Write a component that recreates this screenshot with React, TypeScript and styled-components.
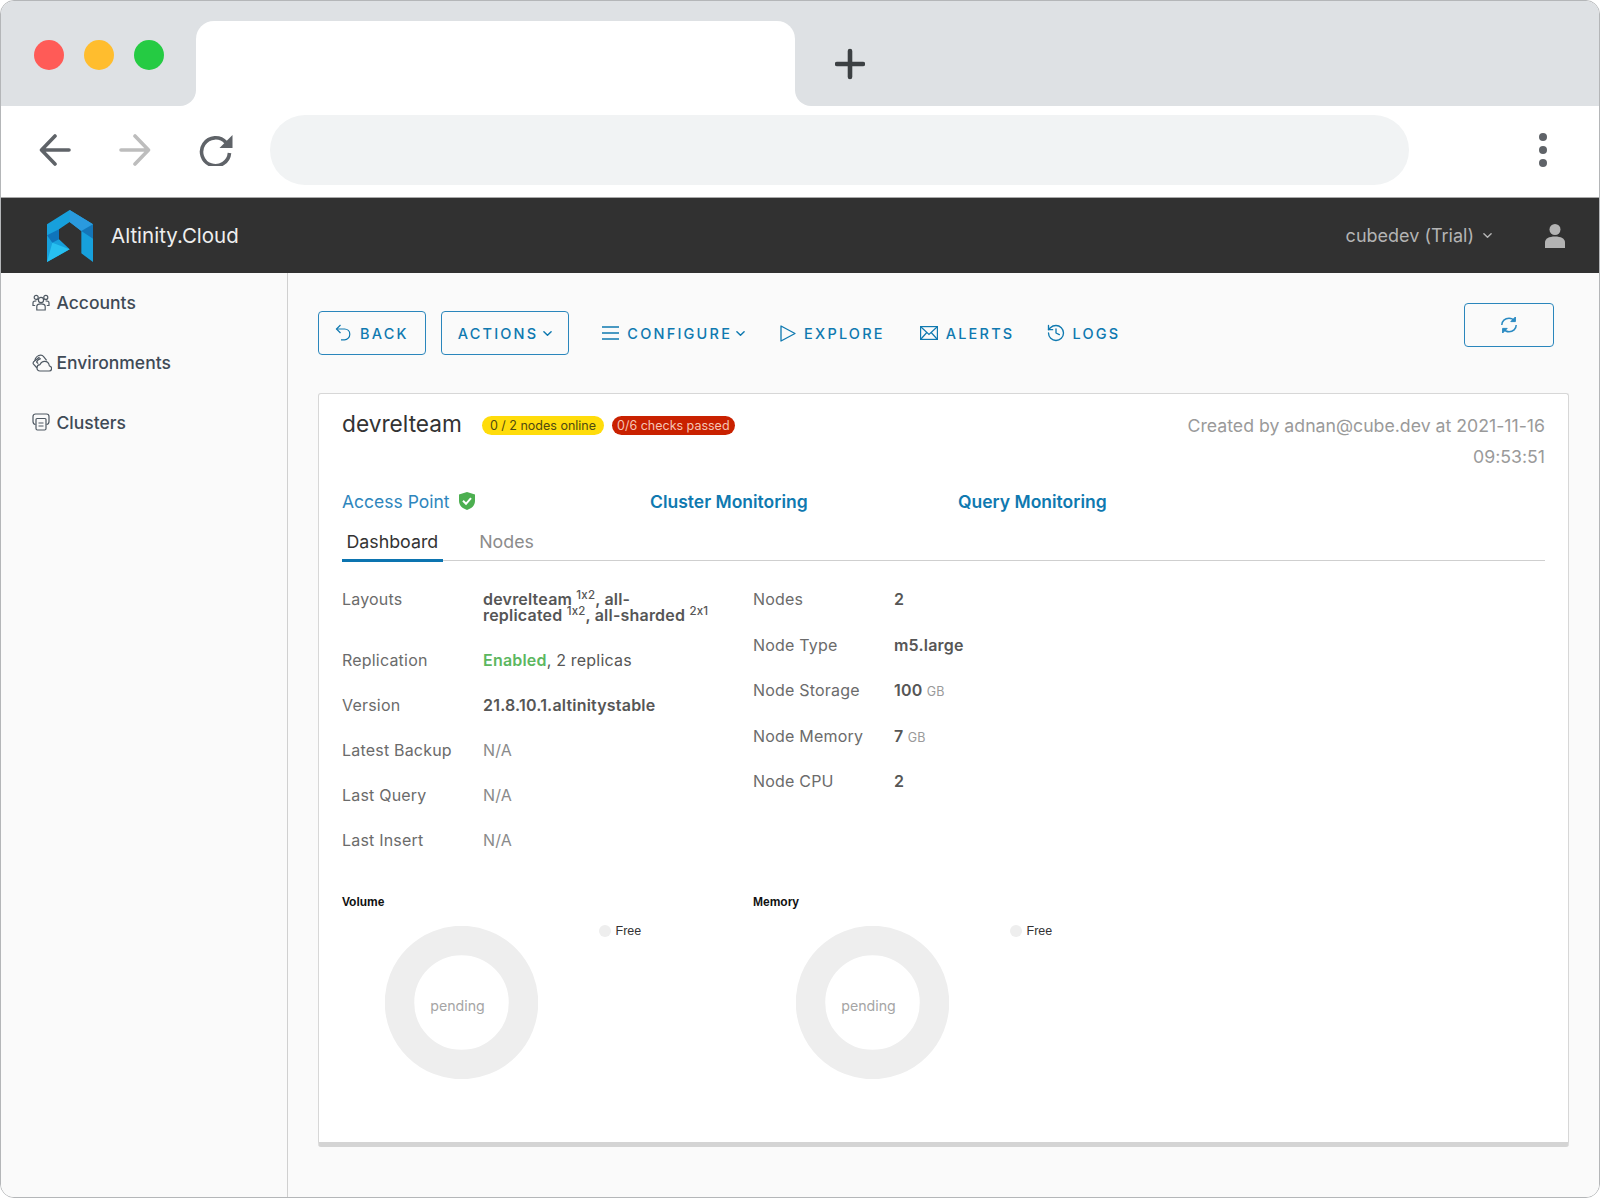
import * as React from "react";
import styled, { createGlobalStyle } from "styled-components";
import { History } from "lucide-react";

const sans = `Inter, "Liberation Sans", sans-serif`;
const blue = "#0f79b0";

const GlobalStyle = createGlobalStyle`
  html, body {
    margin: 0;
    background: #fff;
  }
  body {
    font-family: ${sans};
    font-feature-settings: "calt" 0;
  }
`;

const Window = styled.div`
  box-sizing: border-box;
  width: 1600px;
  height: 1198px;
  display: flex;
  flex-direction: column;
  overflow: hidden;
  border: 1.5px solid #b4b6b8;
  border-radius: 14px;
  background: #fff;
`;

const TabStrip = styled.div`
  display: grid;
  grid-template-columns: 195px 599px 1fr;
  height: 105px;
  flex: none;
`;

const LeftCap = styled.div`
  display: flex;
  gap: 20px;
  padding: 39px 0 0 32.5px;
  background: #dee1e4;
  border-bottom-right-radius: 16px;
`;

const Dot = styled.span<{ $color: string }>`
  width: 30px;
  height: 30px;
  border-radius: 50%;
  background: ${(p) => p.$color};
`;

const TabSlot = styled.div`
  background: #dee1e4;
  padding-top: 20px;
`;

const ActiveTab = styled.div`
  height: 85px;
  background: #fff;
  border-radius: 18px 18px 0 0;
`;

const RightCap = styled.div`
  padding: 47px 0 0 40px;
  background: #dee1e4;
  border-bottom-left-radius: 16px;
`;

const NavRow = styled.div`
  display: flex;
  align-items: center;
  box-sizing: border-box;
  flex: none;
  height: 92px;
  padding: 0 52px 3px 38px;
  gap: 48px;
  border-bottom: 1px solid #a9a9a9;
`;

const AddressBar = styled.div`
  width: 1139px;
  height: 70px;
  margin-left: -11px;
  border-radius: 35px;
  background: #f1f3f4;
`;

const Kebab = styled.div`
  display: flex;
  flex-direction: column;
  gap: 5px;
  margin-left: auto;
`;

const KebabDot = styled.span`
  width: 8px;
  height: 8px;
  border-radius: 50%;
  background: #5f6368;
`;

const Header = styled.header`
  display: flex;
  align-items: center;
  flex: none;
  height: 75px;
  padding: 0 34px 0 46px;
  background: #313131;
`;

const Brand = styled.div`
  margin-left: 18px;
  color: #eeeeee;
  font-size: 20.5px;
`;

const Account = styled.div`
  display: flex;
  align-items: center;
  gap: 9px;
  margin-left: auto;
  margin-right: 53px;
  color: #b4b4b4;
  font-size: 18px;
`;

const Body = styled.div`
  display: flex;
  flex: 1;
  min-height: 0;
  background: #fafafa;
`;

const Sidebar = styled.nav`
  flex: none;
  width: 287px;
  padding-left: 31px;
  box-sizing: border-box;
  border-right: 1.5px solid #d0d0d0;
`;

const SideItem = styled.div`
  display: grid;
  grid-template-columns: 24.5px 1fr;
  align-items: center;
  height: 59.7px;
  color: #3f4a56;
  font-size: 17.5px;
  font-weight: 500;
`;

const Main = styled.main`
  flex: 1;
  min-width: 0;
  padding: 30px 30px 0 30px;
`;

const Toolbar = styled.div`
  display: flex;
  align-items: flex-start;
  height: 90px;
`;

const ButtonGroup = styled.div`
  display: flex;
  gap: 15px;
  margin-top: 8px;
`;

const OutlineButton = styled.button`
  display: flex;
  align-items: center;
  gap: 9px;
  box-sizing: border-box;
  height: 44px;
  margin: 0;
  padding: 0 16px;
  border: 1.5px solid #2a86bc;
  border-radius: 4px;
  background: transparent;
  color: ${blue};
  font-family: ${sans};
  font-size: 14.5px;
  font-weight: 500;
  letter-spacing: 2.2px;
`;

const ActionLinks = styled.div`
  display: flex;
  align-items: center;
  gap: 35px;
  height: 44px;
  margin: 8px 0 0 33px;
`;

const ActionLink = styled.a`
  display: flex;
  align-items: center;
  gap: 8px;
  color: ${blue};
  font-size: 14.5px;
  font-weight: 500;
  letter-spacing: 2.2px;
`;

const LogsLink = styled(ActionLink)`
  gap: 6px;
  margin-left: -3px;
`;

const CaretSlot = styled.span`
  display: flex;
  margin-left: -4px;
`;

const RefreshButton = styled(OutlineButton)`
  justify-content: center;
  width: 90px;
  margin-left: auto;
  margin-right: 15px;
  padding: 0;
`;

const Card = styled.section`
  box-sizing: border-box;
  height: 754px;
  padding: 0 23px;
  border: 1px solid #d7d7d7;
  border-bottom: 5px solid #d4d4d4;
  border-radius: 3px;
  background: #fff;
`;

const CardHead = styled.div`
  display: flex;
  justify-content: space-between;
  height: 62px;
  padding-top: 16px;
`;

const TitleRow = styled.div`
  display: flex;
  align-items: center;
  height: 31px;
`;

const Title = styled.h2`
  margin: -4px 20px 0 0;
  color: #333;
  font-size: 22.7px;
  font-weight: 400;
`;

const Badge = styled.span<{ $bg: string; $fg: string; $pad: number }>`
  display: flex;
  align-items: center;
  height: 19px;
  margin: -1px 8px 0 0;
  padding: 0 ${(p) => p.$pad}px;
  border-radius: 10px;
  background: ${(p) => p.$bg};
  color: ${(p) => p.$fg};
  font-size: 12.5px;
`;

const Created = styled.div`
  width: 370px;
  color: #9a9a9a;
  font-size: 17.7px;
  line-height: 31px;
  text-align: right;
`;

const LinkRow = styled.div`
  display: grid;
  grid-template-columns: 308px 308px 1fr;
  align-items: center;
  height: 30px;
  margin-top: 14px;
`;

const AccessLink = styled.a`
  display: flex;
  align-items: center;
  gap: 9px;
  color: #2e86bd;
  font-size: 17.5px;
`;

const MonitorLink = styled.a`
  color: #0f79b0;
  font-size: 17.5px;
  font-weight: 600;
`;

const Tabs = styled.div`
  display: flex;
  align-items: stretch;
  gap: 32px;
  height: 44px;
  border-bottom: 1.5px solid #cfcfcf;
`;

const Tab = styled.div<{ $active?: boolean }>`
  display: flex;
  align-items: center;
  margin-bottom: -1.5px;
  padding: 8px 4.5px 0;
  border-bottom: 3px solid ${(p) => (p.$active ? "#0c74b0" : "transparent")};
  color: ${(p) => (p.$active ? "#333" : "#8c8c8c")};
  font-size: 17.8px;
`;

const Details = styled.div`
  display: grid;
  grid-template-columns: 411px 1fr;
  margin-top: 30px;
`;

const FactList = styled.dl<{ $gap: number }>`
  display: flex;
  flex-direction: column;
  gap: ${(p) => p.$gap}px;
  margin: 0;
`;

const Fact = styled.div`
  display: grid;
  grid-template-columns: 141px 238px;
  font-size: 16px;
  line-height: 16px;
  letter-spacing: 0.2px;
`;

const FactLabel = styled.dt`
  color: #6b6b6b;
`;

const FactValue = styled.dd<{ $muted?: boolean }>`
  margin: 0;
  color: ${(p) => (p.$muted ? "#8a8a8a" : "#565656")};
  font-weight: ${(p) => (p.$muted ? 400 : 600)};
`;

const Plain = styled.span`
  font-weight: 400;
`;

const Ok = styled.span`
  color: #5cb75f;
  font-weight: 600;
`;

const Unit = styled.span`
  color: #9a9a9a;
  font-size: 12.5px;
  font-weight: 400;
  line-height: 0;
`;

const Sup = styled.sup`
  font-size: 11.5px;
  font-weight: 500;
  line-height: 0;
  vertical-align: 6px;
`;

const Charts = styled.div`
  display: grid;
  grid-template-columns: 411px 411px;
  margin-top: 47px;
`;

const ChartTitle = styled.div`
  color: #111;
  font-family: "Liberation Sans", sans-serif;
  font-size: 12px;
  font-weight: 700;
  line-height: 14px;
`;

const ChartBody = styled.div`
  display: flex;
  align-items: flex-start;
  gap: 61px;
  margin: 17px 0 0 42.5px;
`;

const Legend = styled.div`
  display: flex;
  align-items: center;
  gap: 5px;
  height: 14px;
  margin-top: -2px;
  color: #333;
  font-family: "Liberation Sans", sans-serif;
  font-size: 12.5px;
`;

const LegendDot = styled.span`
  width: 12px;
  height: 12px;
  border-radius: 50%;
  background: #eeeeee;
`;

const PendingLabel = styled.text`
  fill: #a5a5a5;
  font-family: ${sans};
  font-size: 14.2px;
`;

const Plus = () => (
  <svg width="30" height="32" viewBox="0 0 30 32" fill="none" stroke="#3c4043" strokeWidth="4.6" strokeLinecap="round">
    <path d="M15 3V29M2 16H28" />
  </svg>
);

const BackArrow = ({ color }: { color: string }) => (
  <svg width="32" height="32" viewBox="0 0 32 32" fill="none" stroke={color} strokeWidth="3.6" strokeLinecap="round" strokeLinejoin="round">
    <path d="M30 16H3M16 2L2.5 16L16 30" />
  </svg>
);

const ForwardArrow = ({ color }: { color: string }) => (
  <svg width="32" height="32" viewBox="0 0 32 32" fill="none" stroke={color} strokeWidth="3.6" strokeLinecap="round" strokeLinejoin="round">
    <path d="M2 16H29M16 2L29.5 16L16 30" />
  </svg>
);

const Reload = () => (
  <svg width="34" height="32" viewBox="0 0 34 32" fill="none">
    <path d="M27 8.5A14 14 0 1 0 30.5 19" stroke="#5f6368" strokeWidth="3.6" />
    <path d="M33.5 1V14H20.5Z" fill="#5f6368" />
  </svg>
);

const Logo = () => (
  <svg width="46" height="52" viewBox="82 42 138 156">
    <path d="M150 42L220 85V198L185 172V105L150 78L118 100V130L150 160L82 198V85Z" fill="#17a0dc" />
    <path d="M150 42L220 85L185 105L150 78Z" fill="#2a9ade" />
    <path d="M220 85V128L185 105Z" fill="#1476b8" />
    <path d="M82 118L118 100V130L98 140Z" fill="#0f74bb" />
    <path d="M82 198L98 140L150 160Z" fill="#27c0f0" />
  </svg>
);

const Caret = ({ size = 9, color = "currentColor" }: { size?: number; color?: string }) => (
  <svg width={size} height={size} viewBox="0 0 10 10" fill="none" stroke={color} strokeWidth="1.6" strokeLinecap="round" strokeLinejoin="round">
    <path d="M1 3L5 7L9 3" />
  </svg>
);

const UserIcon = () => (
  <svg width="20" height="24" viewBox="0 0 20 24" fill="#b3b3b3">
    <circle cx="10" cy="5.5" r="5.5" />
    <path d="M0 24V18.5C0 14.5 4 12.5 10 12.5S20 14.5 20 18.5V24Z" />
  </svg>
);

const AccountsIcon = () => (
  <svg width="18" height="17" viewBox="0 0 18 17" fill="none" stroke="#4f5963" strokeWidth="1.2">
    <circle cx="9" cy="6" r="2.6" />
    <circle cx="4.2" cy="3.4" r="2" />
    <circle cx="13.8" cy="3.4" r="2" />
    <path d="M4.8 16V12.5C4.8 10.5 7 9.8 9 9.8S13.2 10.5 13.2 12.5V16Z" />
    <path d="M3.2 11.5H1V8.8C1 7.4 2.6 6.8 4.4 6.8M14.8 11.5H17V8.8C17 7.4 15.4 6.8 13.6 6.8" />
  </svg>
);

const EnvironmentsIcon = () => (
  <svg width="20" height="18" viewBox="0 0 20 18" fill="none" stroke="#4f5963" strokeWidth="1.2" strokeLinejoin="round">
    <path d="M8 17H17.3C18.8 17 19.6 15.9 19.6 14.6C19.6 13.2 18.7 12.2 17.4 12C17 9.2 15 7.3 12.6 7.3C10.3 7.3 8.7 8.8 8 10.6C6 10.7 5 12.2 5 13.8C5 15.7 6.4 17 8 17Z" />
    <path d="M5 14L1.5 10.2C.7 9.2 1.2 7.8 2.2 7.2L7.5 3" />
    <path d="M2.8 6.6C3.3 4 5.5 1.2 8.8 1.2C10 1.2 11 1.8 11.8 2.8L14.6 6.4" />
    <path d="M6.2 9.6L4.6 8C5.2 6.4 6.8 4.8 8.8 4.6" />
  </svg>
);

const ClustersIcon = () => (
  <svg width="18" height="18" viewBox="0 0 18 18" fill="none" stroke="#4f5963" strokeWidth="1.2" strokeLinejoin="round">
    <path d="M3.5 11.5C1.8 11.2 1 10 1 8.5V3.5C1 2 2.2 1 3.5 1H14.5C15.8 1 17 2 17 3.5V8.5C17 10 16.2 11.2 14.5 11.5" />
    <path d="M5 5.5H13C13.6 5.5 14 6 14 6.5V15.5C14 16.3 13.5 17 12.6 17H5.4C4.5 17 4 16.3 4 15.5V6.5C4 6 4.4 5.5 5 5.5Z" />
    <path d="M6.5 10H11.5M6.5 13H11.5" />
  </svg>
);

const UndoIcon = () => (
  <svg width="16" height="18" viewBox="0 0 16 18" fill="none" stroke={blue} strokeWidth="1.2">
    <path d="M5.5 1L1.5 5L5.5 9" />
    <path d="M1.5 5H9.5C12.5 5 14.8 7.2 14.8 10.2S12.5 15.8 9.5 15.8H6" />
  </svg>
);

const MenuIcon = () => (
  <svg width="17" height="14" viewBox="0 0 17 14" fill="none" stroke={blue} strokeWidth="1.3">
    <path d="M0 1H17M0 7H17M0 13H17" />
  </svg>
);

const PlayIcon = () => (
  <svg width="16" height="17" viewBox="0 0 16 17" fill="none" stroke={blue} strokeWidth="1.3" strokeLinejoin="round">
    <path d="M1 1V16L15 8.5Z" />
  </svg>
);

const MailIcon = () => (
  <svg width="18" height="14" viewBox="0 0 18 14" fill="none" stroke={blue} strokeWidth="1.2">
    <rect x=".6" y=".6" width="16.8" height="12.8" />
    <path d="M1 1L9 8.5L17 1M1 13L6.8 6.5M17 13L11.2 6.5" />
  </svg>
);

const RefreshIcon = () => (
  <svg width="20" height="20" viewBox="0 0 20 20" fill="none" stroke="#2a8ac2" strokeWidth="1.5">
    <path d="M2.8 10C2.8 6 6 3.2 10 3.2C12.2 3.2 14.2 4.2 15.5 6" />
    <path d="M16.4 2V6.6H11.8Z" fill="#2a8ac2" strokeWidth="1" />
    <path d="M17.2 10C17.2 14 14 16.8 10 16.8C7.8 16.8 5.8 15.8 4.5 14" />
    <path d="M3.6 18V13.4H8.2Z" fill="#2a8ac2" strokeWidth="1" />
  </svg>
);

const ShieldIcon = () => (
  <svg width="16" height="18" viewBox="0 0 16 18">
    <path d="M8 0L16 2.5V9C16 13.5 12.5 16.5 8 18C3.5 16.5 0 13.5 0 9V2.5Z" fill="#4caf50" />
    <path d="M4 8.8L7 11.8L12 6.2" fill="none" stroke="#fff" strokeWidth="2" />
  </svg>
);

const Donut = () => (
  <svg width="153" height="153" viewBox="0 0 153 153">
    <circle cx="76.5" cy="76.5" r="62" fill="none" stroke="#eeeeee" strokeWidth="29.5" />
    <PendingLabel x="72.5" y="85" textAnchor="middle">
      pending
    </PendingLabel>
  </svg>
);

const leftFacts = [
  { label: "Replication", value: <><Ok>Enabled</Ok><Plain>, 2 replicas</Plain></> },
  { label: "Version", value: "21.8.10.1.altinitystable" },
  { label: "Latest Backup", value: "N/A", muted: true },
  { label: "Last Query", value: "N/A", muted: true },
  { label: "Last Insert", value: "N/A", muted: true }
];

const rightFacts = [
  { label: "Nodes", value: "2" },
  { label: "Node Type", value: "m5.large" },
  { label: "Node Storage", value: <>100 <Unit>GB</Unit></> },
  { label: "Node Memory", value: <>7 <Unit>GB</Unit></> },
  { label: "Node CPU", value: "2" }
];

const charts = ["Volume", "Memory"];

const App = () => (
  <Window>
    <GlobalStyle />
    <TabStrip>
      <LeftCap>
        <Dot $color="#ff5b57" />
        <Dot $color="#ffbd2e" />
        <Dot $color="#25cb43" />
      </LeftCap>
      <TabSlot>
        <ActiveTab />
      </TabSlot>
      <RightCap>
        <Plus />
      </RightCap>
    </TabStrip>
    <NavRow>
      <BackArrow color="#5f6368" />
      <ForwardArrow color="#bdbdbd" />
      <Reload />
      <AddressBar />
      <Kebab>
        <KebabDot />
        <KebabDot />
        <KebabDot />
      </Kebab>
    </NavRow>
    <Header>
      <Logo />
      <Brand>Altinity.Cloud</Brand>
      <Account>
        cubedev (Trial)
        <Caret color="#b4b4b4" />
      </Account>
      <UserIcon />
    </Header>
    <Body>
      <Sidebar>
        <SideItem>
          <AccountsIcon />
          Accounts
        </SideItem>
        <SideItem>
          <EnvironmentsIcon />
          Environments
        </SideItem>
        <SideItem>
          <ClustersIcon />
          Clusters
        </SideItem>
      </Sidebar>
      <Main>
        <Toolbar>
          <ButtonGroup>
            <OutlineButton>
              <UndoIcon />
              BACK
            </OutlineButton>
            <OutlineButton>
              ACTIONS
              <CaretSlot>
                <Caret />
              </CaretSlot>
            </OutlineButton>
          </ButtonGroup>
          <ActionLinks>
            <ActionLink>
              <MenuIcon />
              CONFIGURE
              <CaretSlot>
                <Caret />
              </CaretSlot>
            </ActionLink>
            <ActionLink>
              <PlayIcon />
              EXPLORE
            </ActionLink>
            <ActionLink>
              <MailIcon />
              ALERTS
            </ActionLink>
            <LogsLink>
              <History size={20} strokeWidth={1.6} />
              LOGS
            </LogsLink>
          </ActionLinks>
          <RefreshButton>
            <RefreshIcon />
          </RefreshButton>
        </Toolbar>
        <Card>
          <CardHead>
            <TitleRow>
              <Title>devrelteam</Title>
              <Badge $bg="#ffdc0b" $fg="#4f4a10" $pad={8}>0 / 2 nodes online</Badge>
              <Badge $bg="#c92100" $fg="#f5c4b4" $pad={5}>0/6 checks passed</Badge>
            </TitleRow>
            <Created>Created by adnan@cube.dev at 2021-11-16 09:53:51</Created>
          </CardHead>
          <LinkRow>
            <AccessLink>
              Access Point
              <ShieldIcon />
            </AccessLink>
            <MonitorLink>Cluster Monitoring</MonitorLink>
            <MonitorLink>Query Monitoring</MonitorLink>
          </LinkRow>
          <Tabs>
            <Tab $active>Dashboard</Tab>
            <Tab>Nodes</Tab>
          </Tabs>
          <Details>
            <FactList $gap={29}>
              <Fact>
                <FactLabel>Layouts</FactLabel>
                <FactValue>
                  devrelteam <Sup>1x2</Sup>, all-
                  <br />
                  replicated <Sup>1x2</Sup>, all-sharded <Sup>2x1</Sup>
                </FactValue>
              </Fact>
              {leftFacts.map((f) => (
                <Fact key={f.label}>
                  <FactLabel>{f.label}</FactLabel>
                  <FactValue $muted={f.muted}>{f.value}</FactValue>
                </Fact>
              ))}
            </FactList>
            <FactList $gap={29.6}>
              {rightFacts.map((f) => (
                <Fact key={f.label}>
                  <FactLabel>{f.label}</FactLabel>
                  <FactValue>{f.value}</FactValue>
                </Fact>
              ))}
            </FactList>
          </Details>
          <Charts>
            {charts.map((name) => (
              <div key={name}>
                <ChartTitle>{name}</ChartTitle>
                <ChartBody>
                  <Donut />
                  <Legend>
                    <LegendDot />
                    Free
                  </Legend>
                </ChartBody>
              </div>
            ))}
          </Charts>
        </Card>
      </Main>
    </Body>
  </Window>
);

export default App;
